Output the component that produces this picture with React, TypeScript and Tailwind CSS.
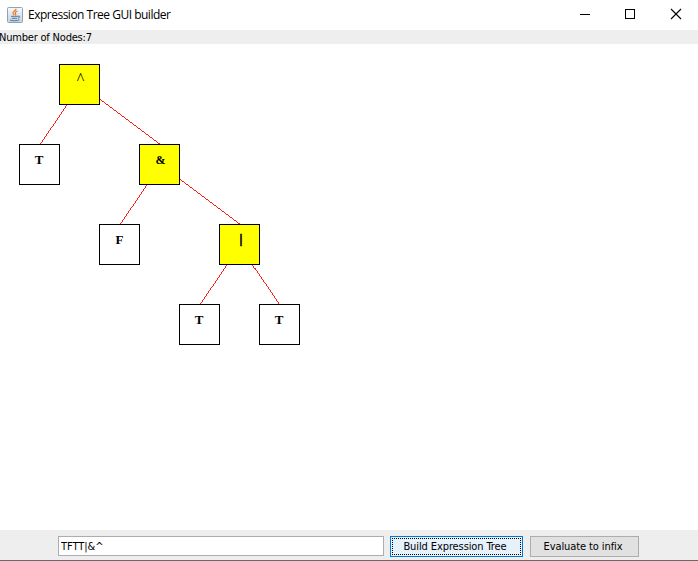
import React from "react";

type TreeNode = { x: number; y: number; label: string; operator?: boolean; dx: number; size?: number; dy?: number };

const nodes: TreeNode[] = [
  { x: 59, y: 20, label: "^", operator: true, dx: 21.5, size: 16, dy: 20 },
  { x: 19, y: 100, label: "T", dx: 20 },
  { x: 139, y: 100, label: "&", operator: true, dx: 21.5, size: 12 },
  { x: 99, y: 180, label: "F", dx: 20.5 },
  { x: 219, y: 180, label: "|", operator: true, dx: 22, size: 13, dy: 19 },
  { x: 179, y: 260, label: "T", dx: 20 },
  { x: 259, y: 260, label: "T", dx: 20 },
];

const edges = [
  [66, 60, 39, 100],
  [99, 55, 159, 100],
  [146, 140, 119, 180],
  [179, 135, 239, 180],
  [226, 220, 199, 260],
  [252, 220, 279, 260],
];

function JavaIcon() {
  return (
    <svg width="16" height="16" viewBox="0 0 16 16" className="shrink-0">
      <defs>
        <linearGradient id="tile" x1="0" y1="0" x2="0" y2="1">
          <stop offset="0" stopColor="#f7fafc" />
          <stop offset="1" stopColor="#c3d2df" />
        </linearGradient>
      </defs>
      <rect x="0.5" y="0.5" width="15" height="15" rx="1" fill="url(#tile)" stroke="#8ea3b5" />
      <path d="M9 1.8C9.2 3.8 5.6 4.4 6 6.2C6.2 7 7 7.2 7.2 8.2M10.6 4C8.4 4.8 7.8 5.6 8.4 6.4C8.9 7.1 8.8 7.7 8.2 8.3" fill="none" stroke="#ed7d2b" strokeWidth="1.3" />
      <path d="M4 9.3H11M4.8 11.3H10M11 9.2C13.4 8.6 13.2 10.8 10.8 11.3M3 13C4.5 14 10.5 14 12.5 12.8" fill="none" stroke="#55789a" strokeWidth="1" />
    </svg>
  );
}

export default function App() {
  return (
    <div className="flex h-[561px] w-[698px] flex-col overflow-hidden bg-white text-black">
      <header className="flex h-[30px] shrink-0 items-center justify-between pl-[7px]">
        <div className="flex items-center gap-[5px]">
          <JavaIcon />
          <span className="whitespace-nowrap font-['Open_Sans',sans-serif] text-[12px] leading-4 tracking-[-0.5px]">Expression Tree GUI builder</span>
        </div>
        <svg width="118" height="30" viewBox="0 0 118 30" fill="none" stroke="#000" shapeRendering="crispEdges">
          <path d="M0 14.5H10M45.5 9.5H54.5V18.5H45.5Z" />
          <path d="M91 9L101 19M101 9L91 19" strokeWidth="1.1" shapeRendering="auto" />
        </svg>
      </header>

      <div className="h-[14px] shrink-0 bg-[#eeeeee] pt-px font-['DejaVu_Sans_Condensed','DejaVu_Sans',sans-serif] text-[11px] leading-[14px] tracking-[-0.2px]">
        <span className="-ml-px whitespace-nowrap">Number of Nodes:7</span>
      </div>

      <main className="h-[486px] shrink-0">
        <svg width="698" height="486" viewBox="0 0 698 486">
          <g stroke="#ff0000" strokeWidth="0.9" shapeRendering="crispEdges">
            {edges.map(([x1, y1, x2, y2]) => (
              <line key={`${x1}-${y1}`} x1={x1 + 0.5} y1={y1 + 0.5} x2={x2 + 0.5} y2={y2 + 0.5} />
            ))}
          </g>
          {nodes.map((n) => (
            <g key={`${n.x}-${n.y}`}>
              <rect x={n.x + 0.5} y={n.y + 0.5} width="40" height="40" fill={n.operator ? "#ffff00" : "#ffffff"} stroke="#000" shapeRendering="crispEdges" />
              <text
                x={n.x + n.dx}
                y={n.y + (n.dy ?? 20)}
                textAnchor="middle"
                fontSize={n.size ?? 13}
                fontWeight={n.label === "^" ? 400 : 700}
                stroke={n.label === "|" ? "#000" : "none"}
                strokeWidth="0.6"
                className="font-['Liberation_Serif',serif]"
              >
                {n.label}
              </text>
            </g>
          ))}
        </svg>
      </main>

      <footer className="flex h-[31px] shrink-0 items-start border-b border-[#696969] bg-[#eeeeee] pl-[58px] pt-[6px] font-['DejaVu_Sans_Condensed','DejaVu_Sans',sans-serif] text-[11px] tracking-[-0.1px]">
        <input
          defaultValue="TFTT|&^"
          className="h-5 w-[326px] rounded-none border border-[#abadb3] bg-white px-[2px] py-0 tracking-[-0.05px] outline-none"
        />
        <button className="ml-[6px] h-[21px] w-[133px] border border-[#0078d7] bg-[#e5f1fb] p-px">
          <span className="flex h-full items-center justify-center whitespace-nowrap border border-dotted border-black pt-px pr-[3px]">Build Expression Tree</span>
        </button>
        <button className="ml-[7px] flex h-[21px] w-[109px] items-center justify-center whitespace-nowrap border border-[#adadad] bg-[#e1e1e1] pt-px pr-[3px]">
          Evaluate to infix
        </button>
      </footer>
    </div>
  );
}
